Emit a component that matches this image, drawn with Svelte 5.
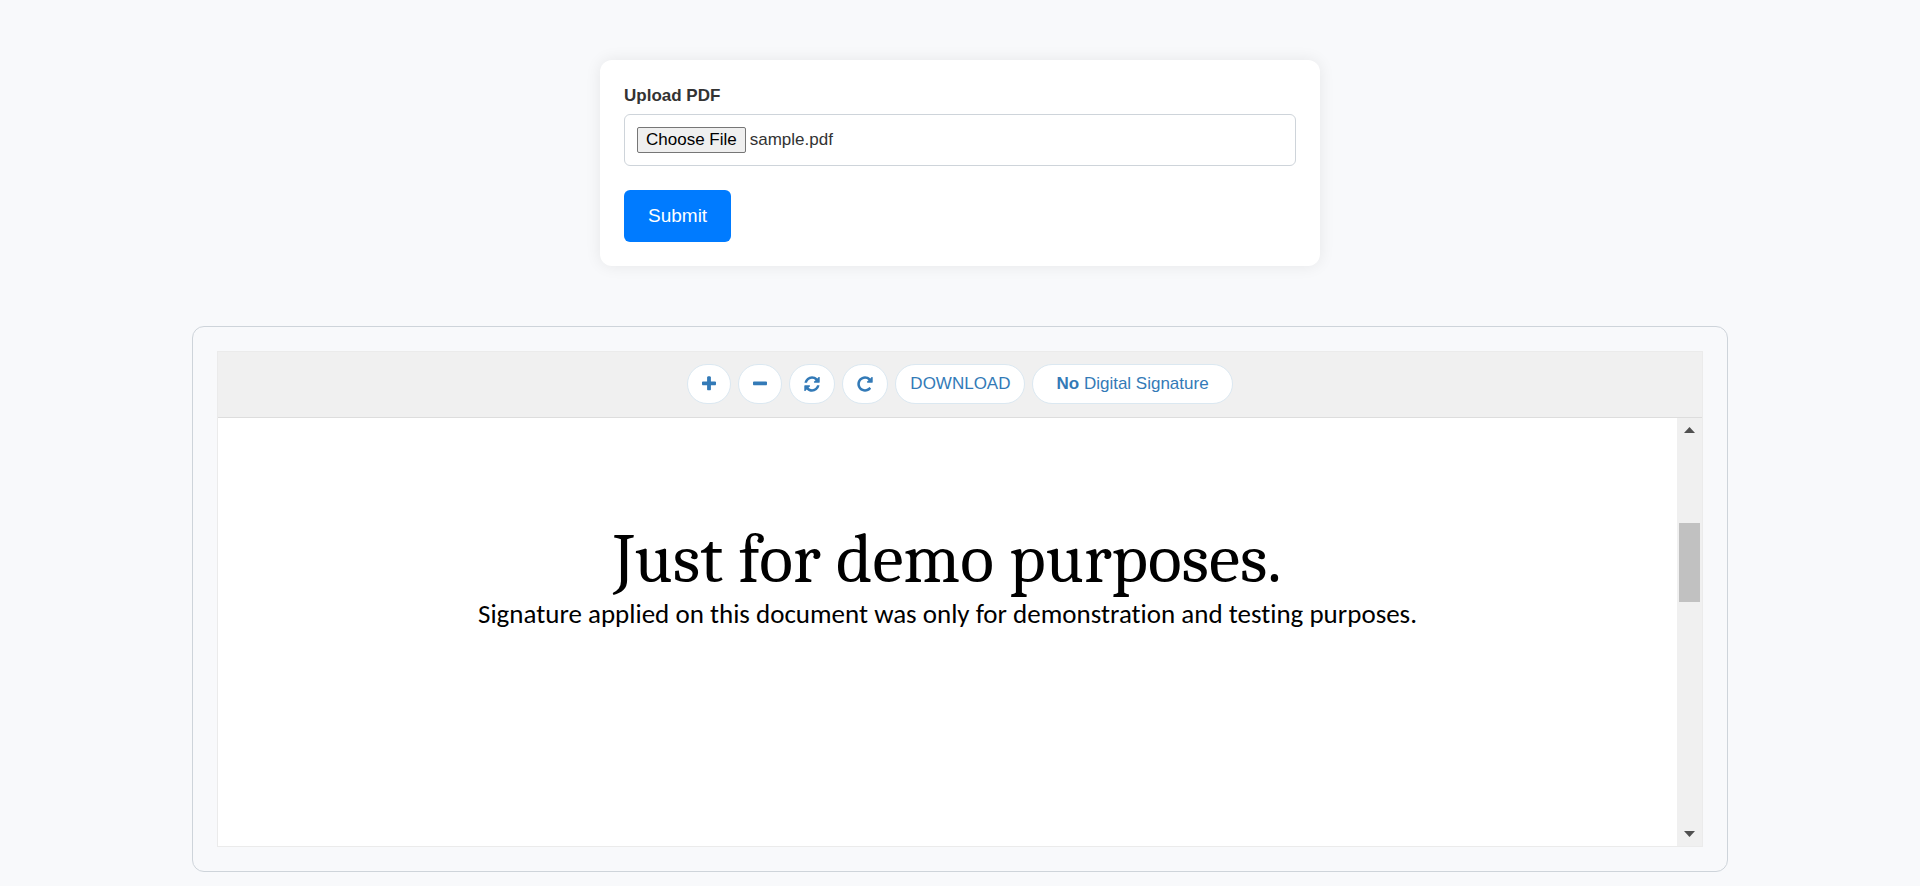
<script>
  import { onMount } from 'svelte';

  let fileInput;

  const tools = [
    {
      label: 'Zoom in',
      width: 14,
      viewBox: '192 0 1408 1792',
      path: 'M1600 736v192q0 40-28 68t-68 28h-416v416q0 40-28 68t-68 28h-192q-40 0-68-28t-28-68v-416h-416q-40 0-68-28t-28-68v-192q0-40 28-68t68-28h416v-416q0-40 28-68t68-28h192q40 0 68 28t28 68v416h416q40 0 68 28t28 68z'
    },
    {
      label: 'Zoom out',
      width: 14,
      viewBox: '192 0 1408 1792',
      path: 'M1600 736v192q0 40-28 68t-68 28h-1216q-40 0-68-28t-28-68v-192q0-40 28-68t68-28h1216q40 0 68 28t28 68z'
    },
    {
      label: 'Refresh',
      width: 16,
      viewBox: '128 0 1536 1792',
      path: 'M1639 1056q0 5-1 7-64 268-268 434.500t-478 166.500q-146 0-282.500-55t-243.500-157l-129 129q-19 19-45 19t-45-19-19-45v-448q0-26 19-45t45-19h448q26 0 45 19t19 45-19 45l-137 137q71 66 161 102t187 36q134 0 250-65t186-179q11-17 53-117 8-23 30-23h192q13 0 22.500 9.500t9.500 22.500zm25-800v448q0 26-19 45t-45 19h-448q-26 0-45-19t-19-45 19-45l138-138q-148-137-349-137-134 0-250 65t-186 179q-11 17-53 117-8 23-30 23h-199q-13 0-22.500-9.500t-9.500-22.500v-7q65-268 270-434.500t480-166.500q146 0 284 55.500t245 156.500l130-129q19-19 45-19t45 19 19 45z'
    },
    {
      label: 'Rotate',
      width: 16,
      viewBox: '128 0 1536 1792',
      path: 'M1664 256v448q0 26-19 45t-45 19h-448q-42 0-59-40-17-39 14-69l138-138q-148-137-349-137-104 0-198.500 40.500t-163.500 109.500-109.500 163.500-40.500 198.500 40.500 198.500 109.500 163.500 163.500 109.500 198.500 40.500q119 0 225-52t179-147q7-10 23-12 15 0 25 9l137 138q9 8 9.500 20.500t-7.500 22.500q-109 132-264 204.500t-327 72.500q-156 0-298-61t-245-164-164-245-61-298 61-298 164-245 245-164 298-61q147 0 284.500 55.500t244.500 156.500l130-129q29-31 70-14 39 17 39 59z'
    }
  ];

  onMount(() => {
    const transfer = new DataTransfer();
    transfer.items.add(new File([''], 'sample.pdf', { type: 'application/pdf' }));
    fileInput.files = transfer.files;
  });
</script>

<main>
  <form class="upload" onsubmit={(e) => e.preventDefault()}>
    <label for="pdf">Upload PDF</label>
    <input id="pdf" type="file" bind:this={fileInput} />
    <button class="submit" type="submit">Submit</button>
  </form>

  <section class="viewer">
    <div class="frame">
      <div class="toolbar">
        {#each tools as tool}
          <button type="button" aria-label={tool.label}>
            <svg width={tool.width} height="18" viewBox={tool.viewBox} aria-hidden="true">
              <path d={tool.path} fill="currentColor" />
            </svg>
          </button>
        {/each}
        <button type="button">DOWNLOAD</button>
        <button type="button" class="signature"><span><b>No</b> Digital Signature</span></button>
      </div>

      <div class="document">
        <article>
          <h1>Just for demo purposes.</h1>
          <p>Signature applied on this document was only for demonstration and testing purposes.</p>
        </article>
        <div class="scrollbar">
          <button type="button" aria-label="Scroll up">
            <svg width="11" height="6" viewBox="0 0 12 6" preserveAspectRatio="none" aria-hidden="true"><path d="M6 0l6 6H0z" fill="currentColor" /></svg>
          </button>
          <div class="track"><div class="thumb"></div></div>
          <button type="button" aria-label="Scroll down">
            <svg width="11" height="6" viewBox="0 0 12 6" preserveAspectRatio="none" aria-hidden="true"><path d="M0 0h12L6 6z" fill="currentColor" /></svg>
          </button>
        </div>
      </div>
    </div>
  </section>
</main>

<style>
  :global(body) {
    background: #f8f9fb;
    color: #333;
    font-family: 'Liberation Sans', Arial, sans-serif;
    font-size: 17px;
  }

  main {
    display: flex;
    flex-direction: column;
    align-items: center;
    gap: 60px;
    padding: 60px 0 15px;
  }

  * {
    box-sizing: border-box;
  }

  button {
    font: inherit;
    cursor: pointer;
  }

  svg {
    display: block;
  }

  .upload {
    display: flex;
    flex-direction: column;
    align-items: flex-start;
    width: 37.5%;
    padding: 24px;
    border-radius: 12px;
    background: #fff;
    box-shadow: 0 0 16px rgba(0, 0, 0, 0.08);
  }

  label {
    margin-bottom: 6px;
    font-weight: bold;
    line-height: 24px;
  }

  input {
    width: 100%;
    padding: 12px;
    border: 1px solid #ced4da;
    border-radius: 6px;
    color: #333;
    font: inherit;
    line-height: 26px;
  }

  input::file-selector-button {
    height: 26px;
    margin: 0 4px 0 0;
    padding: 0 8px;
    border: 1px solid #767676;
    border-radius: 2px;
    background: #efefef;
    color: #000;
    font: inherit;
    line-height: 24px;
  }

  .submit {
    margin-top: 24px;
    padding: 14px 24px;
    border: 0;
    border-radius: 6px;
    background: #007bff;
    color: #fff;
    font-size: 19px;
    line-height: 24px;
  }

  .viewer {
    width: 80%;
    padding: 24px;
    border: 1px solid #ced4da;
    border-radius: 12px;
  }

  .frame {
    border: 1px solid #ebebeb;
    background: #fff;
  }

  .toolbar {
    display: flex;
    justify-content: center;
    gap: 7px;
    padding: 12px 0 13px;
    border-bottom: 1px solid #ddd;
    background: #f0f0f0;
  }

  .toolbar button {
    display: flex;
    align-items: center;
    height: 40px;
    padding: 0 14px;
    border: 1px solid #dbe8f1;
    border-radius: 20px;
    background: #fff;
    color: #337ab7;
    line-height: 24px;
  }

  .toolbar .signature {
    padding: 0 23px;
  }

  .document {
    display: flex;
    height: 428px;
  }

  article {
    flex: 1;
    padding-top: 104px;
    color: #000;
    text-align: center;
  }

  h1 {
    margin: 0;
    font: 400 70px/76px Cambria, Caladea, 'Liberation Serif', serif;
  }

  p {
    margin: 0;
    font: 400 27px/32px Calibri, Carlito, Lato, sans-serif;
    font-variant-ligatures: none;
  }

  .scrollbar {
    display: flex;
    flex-direction: column;
    width: 25px;
    background: #f0f0f0;
  }

  .scrollbar button {
    display: grid;
    place-items: center;
    height: 24px;
    padding: 0;
    border: 0;
    background: none;
    color: #505050;
  }

  .track {
    display: flex;
    flex: 1;
    flex-direction: column;
    padding: 0 2px;
  }

  .track::before {
    content: '';
    flex: 81;
  }

  .track::after {
    content: '';
    flex: 220;
  }

  .thumb {
    flex: 79;
    background: #c1c1c1;
  }
</style>
